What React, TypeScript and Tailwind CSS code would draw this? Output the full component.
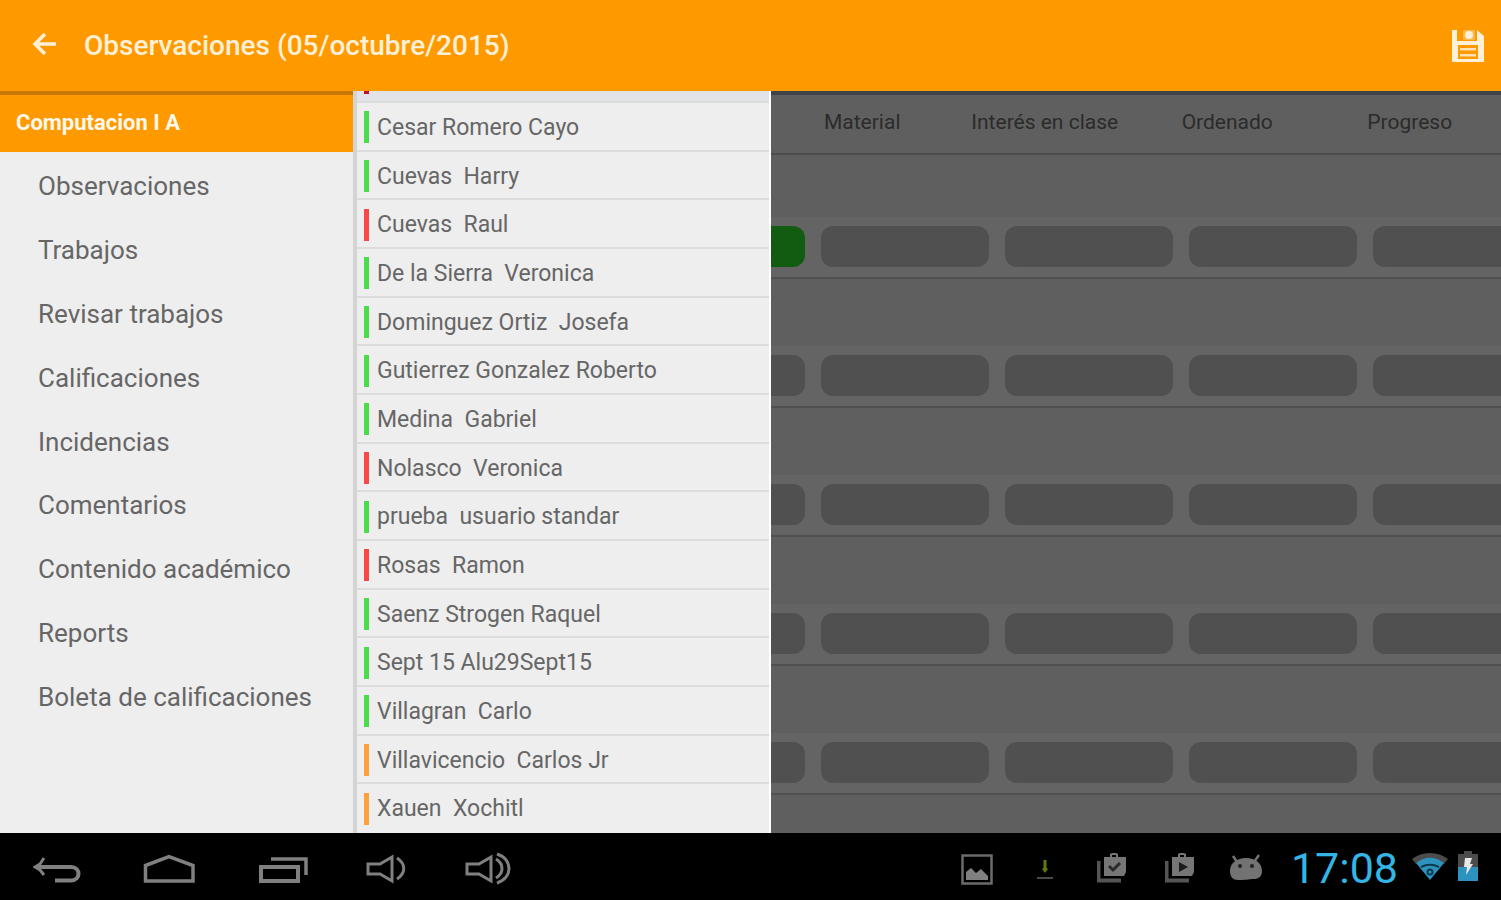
import * as React from "react";

interface Student {
  name: string;
  color: string;
}

const GREEN = "bg-[#4bdc4b]";
const RED = "bg-[#f94848]";
const ORANGE = "bg-[#ffa13a]";

const sections = [
  "Observaciones",
  "Trabajos",
  "Revisar trabajos",
  "Calificaciones",
  "Incidencias",
  "Comentarios",
  "Contenido académico",
  "Reports",
  "Boleta de calificaciones",
];

const students: Student[] = [
  { name: "Cesar Romero Cayo", color: GREEN },
  { name: "Cuevas  Harry", color: GREEN },
  { name: "Cuevas  Raul", color: RED },
  { name: "De la Sierra  Veronica", color: GREEN },
  { name: "Dominguez Ortiz  Josefa", color: GREEN },
  { name: "Gutierrez Gonzalez Roberto", color: GREEN },
  { name: "Medina  Gabriel", color: GREEN },
  { name: "Nolasco  Veronica", color: RED },
  { name: "prueba  usuario standar", color: GREEN },
  { name: "Rosas  Ramon", color: RED },
  { name: "Saenz Strogen Raquel", color: GREEN },
  { name: "Sept 15 Alu29Sept15", color: GREEN },
  { name: "Villagran  Carlo", color: GREEN },
  { name: "Villavicencio  Carlos Jr", color: ORANGE },
  { name: "Xauen  Xochitl", color: ORANGE },
];

const criteria = ["Material", "Interés en clase", "Ordenado", "Progreso"];

const Header = () => (
  <header className="h-[91px] shrink-0 bg-[#ff9900] flex items-center pl-8 pr-4 text-[#fff0d6]">
    <button aria-label="Atrás" className="w-6 h-6 mb-1">
      <svg viewBox="0 0 24 24" fill="none" stroke="currentColor" strokeWidth="3.500">
        <path d="M13 2L3 12l10 10M3 12h21" />
      </svg>
    </button>
    <h1 className="ml-7 text-[28px] leading-9 font-medium">
      Observaciones (05/octubre/2015)
    </h1>
    <button aria-label="Guardar" className="ml-auto w-[34px] h-[34px]">
      <svg viewBox="0 0 34 34" fill="currentColor">
        <path
          fillRule="evenodd"
          d="M1 1H6V12H26V1L33 7V33H1ZM7 16V30H27V16Z"
        />
        <path d="M12 1H24V11H12Z" opacity=".35" />
        <circle cx="18" cy="6" r="4" />
        <path d="M9 19H25V21.500H9ZM9 25H25V27.500H9Z" opacity=".85" />
      </svg>
    </button>
  </header>
);

const Sidebar = () => (
  <nav className="w-[353px] shrink-0 bg-[#eeeeee]">
    <div className="h-[61px] bg-[#ff9900] border-t-4 border-[#c87800] px-4 pb-0.5 flex items-center text-[22px] font-bold text-[#fff8ec]">
      Computacion I A
    </div>
    <ul className="mt-[3px] h-[574px] flex flex-col text-[26px] text-[#666666]">
      {sections.map((section) => (
        <li key={section} className="flex-1 flex items-center">
          <a href="#" className="pl-[38px] w-full">
            {section}
          </a>
        </li>
      ))}
    </ul>
  </nav>
);

const StudentList = () => (
  <div className="w-[418px] shrink-0 bg-[#eeeeee] border-l-4 border-l-[#d4d4d4] border-r-2 border-r-white flex flex-col">
    <div className="h-3 shrink-0 bg-[#e2e3e6] border-b-2 border-[#dcdcdc] pl-[7px]">
      <div className="w-[5px] h-[3px] bg-[#c01020]" />
    </div>
    <ul className="flex-1 flex flex-col text-[23px] text-[#666666]">
      {students.map((student) => (
        <li
          key={student.name}
          className="flex-1 flex items-center pl-[7px] pt-0.5 border-b-2 border-[#dcdcdc] last:border-transparent"
        >
          <span className={`w-[5px] h-8 ${student.color}`} />
          <span className="ml-2 pt-0.5 whitespace-pre">{student.name}</span>
        </li>
      ))}
    </ul>
  </div>
);

const Grades = () => (
  <main className="flex-1 min-w-0 overflow-hidden bg-[#5f5f5f] border-t-4 border-[#3f444a]">
    <div className="h-[60px] pb-0.5 grid grid-cols-4 items-center text-center text-[21px] text-[#2b2b2b] border-b-2 border-[#4d4d4d]">
      {criteria.map((name) => (
        <div key={name}>{name}</div>
      ))}
    </div>
    {[0, 1, 2, 3, 4].map((row) => (
      <div key={row} className="border-b-2 border-[#505050]">
        <div className={row === 0 ? "h-[62px]" : "h-[67px]"} />
        <div className="h-[60px] bg-[#646464] flex gap-4 pt-[9px]">
          <button
            aria-label="Tarea"
            className={`w-[34px] h-[41px] shrink-0 rounded-r-xl ${
              row === 0 ? "bg-[#125c12]" : "bg-[#505050]"
            }`}
          />
          {criteria.map((name) => (
            <button
              key={name}
              aria-label={name}
              className="w-[168px] h-[41px] shrink-0 rounded-xl bg-[#505050]"
            />
          ))}
        </div>
      </div>
    ))}
  </main>
);

const StoreIcon = ({ children }: { children: React.ReactNode }) => (
  <svg viewBox="0 0 30 36" className="w-[30px] h-9">
    <path d="M1.500 12V31.500H24" fill="none" stroke="#555" strokeWidth="4" />
    <path
      fillRule="evenodd"
      fill="#767676"
      d="M7 8H13V5L15 4H19L21 5V8H29V23L27 27H7ZM15 8H19V6H15Z"
    />
    {children}
  </svg>
);

const SystemBar = () => (
  <footer className="h-[67px] shrink-0 bg-black flex items-center justify-between pl-[33px] pr-[23px]">
    <div className="flex gap-[57px]">
      <button aria-label="Volver">
        <svg viewBox="0 0 52 36" className="w-[52px] h-9" fill="none" stroke="#808080" strokeWidth="4">
          <path d="M3 18H38C48 18 48 31.500 38 31.500H22" />
          <path d="M11 9L7 15L2 18L7 21L11 26" strokeWidth="3" />
        </svg>
      </button>
      <button aria-label="Inicio">
        <svg viewBox="0 0 56 36" className="w-14 h-9" fill="none" stroke="#808080" strokeWidth="3.500">
          <path d="M3.500 16.500L27 7.500L51 16.500V32H3.500Z" />
        </svg>
      </button>
      <button aria-label="Recientes">
        <svg viewBox="0 0 54 36" className="w-[54px] h-9" fill="none" stroke="#808080" strokeWidth="4">
          <path d="M6 18H43V32H6Z" />
          <path d="M16 10H51V26" strokeWidth="3.500" />
        </svg>
      </button>
      <button aria-label="Bajar volumen">
        <svg viewBox="0 0 42 36" className="w-[42px] h-9" fill="none" stroke="#808080" strokeWidth="3">
          <path d="M2 15H14L26 8V32L14 25H2Z" />
          <path d="M31 9C40 15 40 24 31 30" />
        </svg>
      </button>
      <button aria-label="Subir volumen">
        <svg viewBox="0 0 47 36" className="w-[47px] h-9" fill="none" stroke="#808080" strokeWidth="3">
          <path d="M2 15H14L26 8V32L14 25H2Z" />
          <path d="M31 10C39 15 39 24 31 29" />
          <path d="M32 5C48 10 48 29 32 34" />
        </svg>
      </button>
    </div>
    <div className="flex items-center">
      <svg viewBox="0 0 32 36" className="w-8 h-9">
        <path d="M1.500 6.500H30.500V34.500H1.500Z" fill="none" stroke="#6b6b6b" strokeWidth="2.500" />
        <path d="M5 31V23L10 19L15 24L20 20L27 27V31Z" fill="#808080" />
      </svg>
      <svg viewBox="0 0 16 36" className="ml-11 w-4 h-9">
        <path d="M6.500 11H9.500V19L11 20L8 24L5 20L6.500 19Z" fill="#5f7a0c" />
        <path d="M0 29H16" stroke="#4a4a4a" strokeWidth="2" />
      </svg>
      <div className="ml-11">
        <StoreIcon>
          <path d="M12 17L16 21L23 14" fill="none" stroke="#2a2a2a" strokeWidth="3" />
        </StoreIcon>
      </div>
      <div className="ml-[38px]">
        <StoreIcon>
          <path d="M14 13L23 18L14 23Z" fill="#1c1c1c" />
        </StoreIcon>
      </div>
      {/* android head */}
      <svg viewBox="0 0 34 36" className="ml-[34px] w-[34px] h-9" fill="#737373">
        <path d="M4 7L8 13M30 6L25 13" stroke="#737373" strokeWidth="2.500" />
        <path d="M1 22C1 14 8 9 17 9S33 14 33 22C33 28 29 30 25 30C20 30 20 31 9 31C4 31 1 28 1 22Z" />
        <circle cx="11" cy="17" r="2" fill="#222" />
        <circle cx="23" cy="17" r="2" fill="#222" />
      </svg>
      <time className="ml-7 pt-1 text-[43px] leading-none text-[#33b5e5]">17:08</time>
      <svg viewBox="0 0 36 36" className="ml-3.5 w-9 h-9">
        <path d="M0 10C10 2 26 2 36 10L32 15C23 8 13 8 4 15Z" fill="#4c4c4c" />
        <path d="M4 14C13 7 23 7 32 14L18 31Z" fill="#2b93bd" />
        <path d="M9 18C15 15 21 15 27 18" stroke="#0d3a4c" strokeWidth="2" fill="none" />
        <circle cx="18" cy="23" r="2.500" stroke="#0d3a4c" strokeWidth="2" fill="none" />
      </svg>
      <svg viewBox="0 0 20 36" className="ml-2.5 w-5 h-9">
        <path d="M0 5H6V2H14V5H20V18H0Z" fill="#4c4c4c" />
        <path d="M0 18H20V32H0Z" fill="#2b93bd" />
        <path d="M7 9H14L12 15H15L8 26L9 18H6Z" fill="#e8e8e8" />
      </svg>
    </div>
  </footer>
);

const App = () => {
  return (
    <div className="w-full h-screen flex flex-col overflow-hidden font-['Roboto',sans-serif]">
      <Header />
      <div className="flex-1 min-h-0 flex">
        <Sidebar />
        <StudentList />
        <Grades />
      </div>
      <SystemBar />
    </div>
  );
};

export default App;
